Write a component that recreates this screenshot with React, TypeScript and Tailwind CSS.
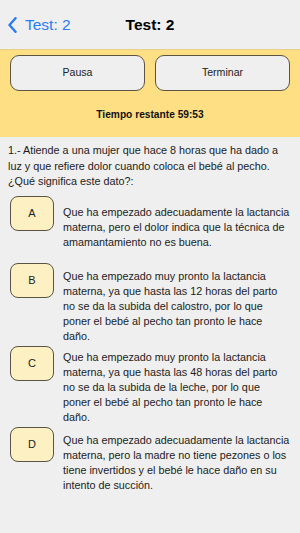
import React from 'react';

type Option = {
  letter: string;
  text: string;
  rowH: string;
  textMt: string;
  textW: string;
};

const options: Option[] = [
  {
    letter: 'A',
    text: 'Que ha empezado adecuadamente la lactancia materna, pero el dolor indica que la técnica de amamantamiento no es buena.',
    rowH: 'h-[67px]',
    textMt: 'mt-[9px]',
    textW: 'w-[227px]',
  },
  {
    letter: 'B',
    text: 'Que ha empezado muy pronto la lactancia materna, ya que hasta las 12 horas del parto no se da la subida del calostro, por lo que poner el bebé al pecho tan pronto le hace daño.',
    rowH: 'h-[83px]',
    textMt: 'mt-[6px]',
    textW: 'w-[227px]',
  },
  {
    letter: 'C',
    text: 'Que ha empezado muy pronto la lactancia materna, ya que hasta las 48 horas del parto no se da la subida de la leche, por lo que poner el bebé al pecho tan pronto le hace daño.',
    rowH: 'h-[81px]',
    textMt: 'mt-[4px]',
    textW: 'w-[227px]',
  },
  {
    letter: 'D',
    text: 'Que ha empezado adecuadamente la lactancia materna, pero la madre no tiene pezones o los tiene invertidos y el bebé le hace daño en su intento de succión.',
    rowH: 'h-auto',
    textMt: 'mt-[6px]',
    textW: 'w-[232px]',
  },
];

export default function App() {
  return (
    <div
      className="w-[300px] h-[533px] bg-[#efefef] overflow-hidden text-[#1c1c1c]"
      style={{ fontFamily: '"Liberation Sans", Arial, sans-serif' }}
    >
      {/* nav bar */}
      <div className="relative h-[49px] bg-[#efefef] flex items-center">
        <div className="flex items-center pl-[8px] text-[#2a7cf6]">
          <svg width="9" height="16" viewBox="0 0 9 16" fill="none">
            <path d="M7.5 1.2 L1.5 8 L7.5 14.8" stroke="#2a7cf6" strokeWidth="2.4" strokeLinecap="round" strokeLinejoin="round" />
          </svg>
          <span className="ml-[8px] text-[15.5px] leading-none">Test: 2</span>
        </div>
        <div className="absolute left-0 right-0 top-0 h-full flex items-center justify-center pointer-events-none">
          <span className="text-[15.5px] leading-none font-bold text-black">Test: 2</span>
        </div>
      </div>

      {/* timer panel */}
      <div className="h-[88px] bg-[#fedf84] border-t border-[#e8cf8a] px-[10px] pt-[5px]">
        <div className="flex gap-[10px]">
          <button className="flex-1 h-[36px] rounded-[9px] border border-[#5b5443] bg-[#efefef] text-[10.6px] text-[#222]">
            Pausa
          </button>
          <button className="flex-1 h-[36px] rounded-[9px] border border-[#5b5443] bg-[#efefef] text-[10.6px] text-[#222]">
            Terminar
          </button>
        </div>
        <p className="mt-[17px] text-center text-[10.2px] leading-[14px] font-bold text-[#111]">Tiempo restante 59:53</p>
      </div>

      {/* question */}
      <div className="pl-[8px] pt-[6px] w-[292px]">
        <p className="text-[10.8px] leading-[15.5px]">
          1.- Atiende a una mujer que hace 8 horas que ha dado a luz y que refiere dolor cuando coloca el bebé al pecho. ¿Qué significa este dato?:
        </p>
      </div>

      <div className="mt-[6px] pl-[10px]">
        {options.map((o) => (
          <div key={o.letter} className={`flex ${o.rowH}`}>
            <div className="w-[44px] h-[35px] shrink-0 rounded-[8px] border border-[#5b5443] bg-[#fdf1c4] flex items-center justify-center text-[11px] text-[#222]">
              {o.letter}
            </div>
            <p className={`ml-[9px] ${o.textW} ${o.textMt} text-[10.8px] leading-[15px] text-[#1c1c1c]`}>{o.text}</p>
          </div>
        ))}
      </div>
    </div>
  );
}
